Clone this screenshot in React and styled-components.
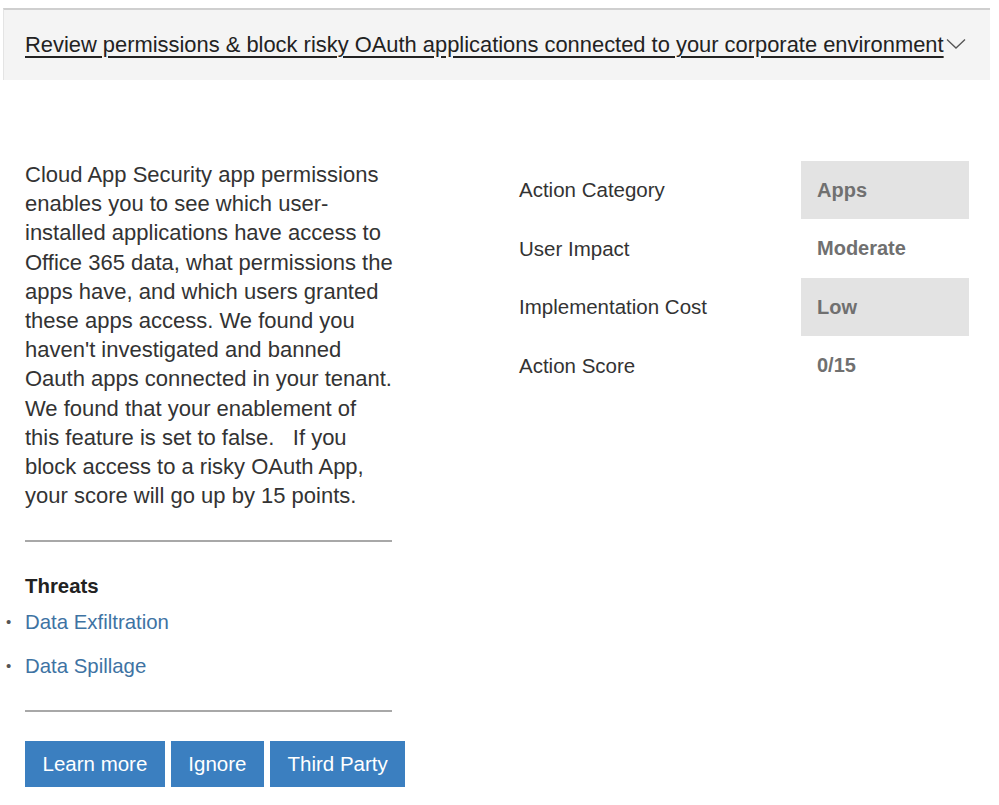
import React from 'react';
import styled, { createGlobalStyle } from 'styled-components';

const GlobalStyle = createGlobalStyle`
  body {
    margin: 0;
    background: #ffffff;
    font-family: "Liberation Sans", Arial, sans-serif;
    color: #333333;
  }`

const details = [
  { label: 'Action Category', value: 'Apps', shaded: true },
  { label: 'User Impact', value: 'Moderate' },
  { label: 'Implementation Cost', value: 'Low', shaded: true },
  { label: 'Action Score', value: '0/15' },
];

const threats = ['Data Exfiltration', 'Data Spillage'];

const App = () => {
  return (
    <>
      <GlobalStyle />
      <Page>
        <Header>
          <Title>Review permissions &amp; block risky OAuth applications connected to your corporate environment</Title>
          <Chevron viewBox="0 0 20 12" aria-hidden="true">
            <path d="M1 1.5 L10 10 L19 1.5" />
          </Chevron>
        </Header>
        <Body>
          <LeftColumn>
            <Description>
              Cloud App Security app permissions enables you to see which user-installed applications have access to Office 365 data, what permissions the apps have, and which users granted these apps access. We found you haven't investigated and banned Oauth apps connected in your tenant. We found that your enablement of this feature is set to false.&nbsp;&nbsp; If you block access to a risky OAuth App, your score will go up by 15 points.
            </Description>
            <Divider />
            <Threats>
              <h3>Threats</h3>
              <ul>
                {threats.map((t) => (
                  <li key={t}><a href="#">{t}</a></li>
                ))}
              </ul>
            </Threats>
            <Divider />
            <ButtonRow>
              <Button>Learn more</Button>
              <Button>Ignore</Button>
              <Button>Third Party</Button>
            </ButtonRow>
          </LeftColumn>
          <DetailTable>
            {details.map((d) => (
              <DetailRow key={d.label}>
                <Label>{d.label}</Label>
                <Value shaded={d.shaded ? 1 : 0}>{d.value}</Value>
              </DetailRow>
            ))}
          </DetailTable>
        </Body>
      </Page>
    </>
  )
}

export default App;

const Page = styled.div`
    width: 999px;
    padding-top: 8px;`
const Header = styled.div`
    margin-left: 3px;
    width: 987px;
    height: 72px;
    box-sizing: border-box;
    background: #f4f4f4;
    border-top: 2px solid #cfcfcf;
    border-left: 1px solid #e4e4e4;
    display: flex;
    align-items: center;
    padding-left: 21px;`
const Title = styled.a`
    font-size: 21.9px;
    color: #222222;
    text-decoration: underline;
    text-underline-offset: 4px;
    white-space: nowrap;`
const Chevron = styled.svg`
    width: 20px;
    height: 12px;
    margin-left: 2px;
    margin-top: -2px;
    fill: none;
    stroke: #555555;
    stroke-width: 1.3;`
const Body = styled.div`
    display: flex;
    padding-left: 25px;
    padding-top: 80px;`
const LeftColumn = styled.div`
    width: 380px;
    flex-shrink: 0;
    display: flex;
    flex-direction: column;`
const Description = styled.p`
    margin: 0;
    width: 369px;
    font-size: 22px;
    line-height: 29.2px;
    color: #333333;`
const Divider = styled.hr`
    width: 367px;
    margin: 30px 0 0 0;
    border: none;
    border-top: 2px solid #a8a8a8;`
const Threats = styled.div`
    padding-top: 33px;
    > h3 {
        margin: 0;
        font-size: 20.4px;
        font-weight: bold;
        color: #222222;
        line-height: 22px;
    }
    > ul {
        margin: 14px 0 0 -25px;
        padding: 0;
        list-style: none;
    }
    > ul > li {
        font-size: 20.4px;
        line-height: 22px;
        margin-bottom: 22px;
        padding-left: 25px;
        position: relative;
    }
    > ul > li:last-child {
        margin-bottom: 3px;
    }
    > ul > li::before {
        content: '•';
        position: absolute;
        left: 6px;
        top: 0;
        font-size: 15px;
        color: #555555;
    }
    > ul > li > a {
        color: #3e73a3;
        text-decoration: none;
    }`
const ButtonRow = styled.div`
    display: flex;
    gap: 6px;
    margin-top: 29px;`
const Button = styled.button`
    height: 46px;
    flex-shrink: 0;
    white-space: nowrap;
    padding: 0 17.5px;
    border: none;
    background: #3b7fc0;
    color: #ffffff;
    font-family: "Liberation Sans", Arial, sans-serif;
    font-size: 20.5px;
    cursor: pointer;`
const DetailTable = styled.div`
    margin-left: 114px;
    margin-top: 1px;
    display: flex;
    flex-direction: column;`
const DetailRow = styled.div`
    display: flex;
    align-items: center;
    height: 58.5px;`
const Label = styled.div`
    width: 282px;
    font-size: 20.5px;
    color: #333333;`
const Value = styled.div`
    width: 168px;
    height: 58px;
    box-sizing: border-box;
    padding-left: 16px;
    display: flex;
    align-items: center;
    font-size: 20px;
    font-weight: bold;
    color: #707070;
    background: ${(p) => (p.shaded ? '#e3e3e3' : 'transparent')};`
